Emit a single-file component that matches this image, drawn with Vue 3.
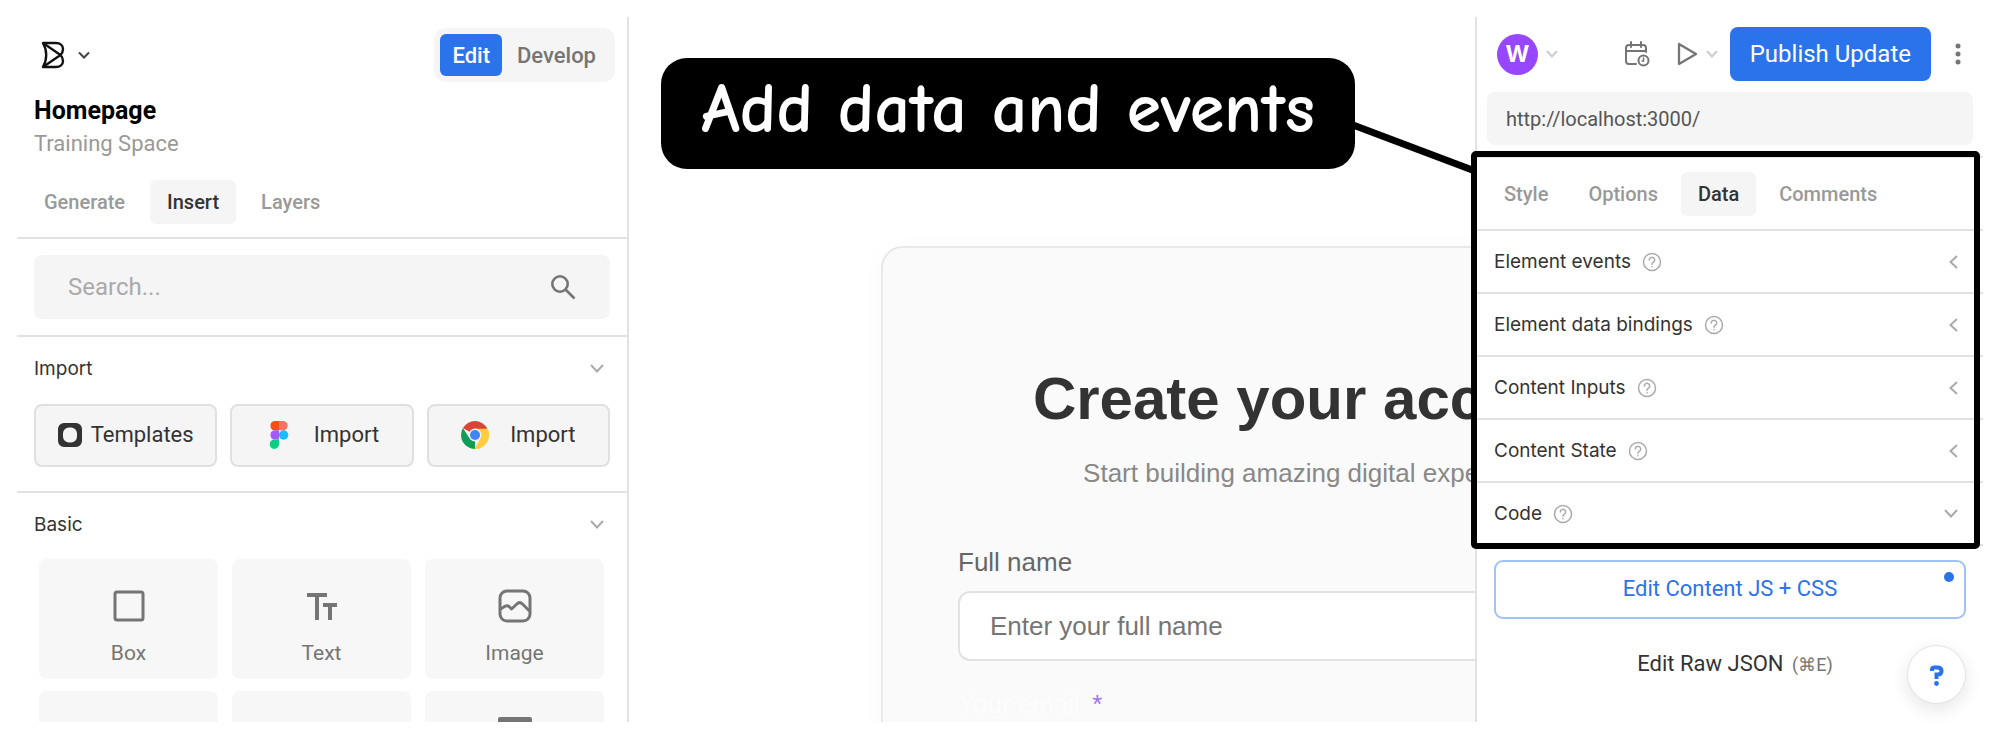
<script setup>
import { ref } from 'vue'

const mode = ref('Edit')
const modes = ['Edit', 'Develop']

const leftTab = ref('Insert')
const leftTabs = ['Generate', 'Insert', 'Layers']

const rightTab = ref('Data')
const rightTabs = ['Style', 'Options', 'Data', 'Comments']

const search = ref('')
const url = ref('http://localhost:3000/')
const fullName = ref('')

const sections = ref([
  { label: 'Element events', open: false },
  { label: 'Element data bindings', open: false },
  { label: 'Content Inputs', open: false },
  { label: 'Content State', open: false },
  { label: 'Code', open: true }
])
</script>

<template>
  <div class="editor">
    <aside class="left-panel">
      <header class="left-header">
        <button class="logo-btn" type="button" aria-label="Main menu">
          <svg width="24" height="28" viewBox="0 0 24 28" fill="none" stroke="#111" stroke-width="2.4" stroke-linejoin="round">
            <path d="M2 2h13c4 0 7 2.500 7 6 0 2.500-1 4.500-2.500 6 1.500 1.500 2.500 3.500 2.500 6 0 3.500-3 6-7 6H2c2-3.500 3.200-7.500 3.200-12S4 5.500 2 2z"/>
            <path d="M2 2l17.500 12L2 26"/>
          </svg>
          <svg width="12" height="8" viewBox="0 0 12 8" fill="none" stroke="#444" stroke-width="2">
            <path d="M1 1.500l5 5 5-5"/>
          </svg>
        </button>
        <div class="mode-switch">
          <button
            v-for="m in modes"
            :key="m"
            type="button"
            class="mode-btn"
            :class="{ active: mode === m }"
            @click="mode = m"
          >{{ m }}</button>
        </div>
      </header>

      <div class="page-info">
        <h1 class="page-name">Homepage</h1>
        <p class="space-name">Training Space</p>
      </div>

      <nav class="tabs left-tabs">
        <button
          v-for="t in leftTabs"
          :key="t"
          type="button"
          class="tab"
          :class="{ active: leftTab === t }"
          @click="leftTab = t"
        >{{ t }}</button>
      </nav>

      <div class="search-row">
        <label class="search-box">
          <input v-model="search" class="search-input" type="text" placeholder="Search..." aria-label="Search" />
          <svg width="26" height="26" viewBox="0 0 26 26" fill="none" stroke="#757575" stroke-width="2.600">
            <circle cx="10" cy="10" r="7.700"/>
            <path d="M15.500 15.500l9 9"/>
          </svg>
        </label>
      </div>

      <section class="group">
        <button class="group-title" type="button">
          <span>Import</span>
          <svg class="chevron" width="14" height="9" viewBox="0 0 14 9"><path d="M1 1l6 6.500L13 1"/></svg>
        </button>
        <div class="import-row">
          <button class="import-btn templates" type="button">
            <svg width="24" height="24" viewBox="0 0 24 24">
              <path fill="#333" fill-rule="evenodd" d="M6 0h12a6 6 0 0 1 6 6v12a6 6 0 0 1-6 6H6a6 6 0 0 1-6-6V6a6 6 0 0 1 6-6zm5 4.500a6 6 0 0 0-6 6v3a6 6 0 0 0 6 6h2a6 6 0 0 0 6-6v-3a6 6 0 0 0-6-6z"/>
            </svg>
            <span>Templates</span>
          </button>
          <button class="import-btn" type="button">
            <svg width="28" height="28" viewBox="0 0 28 28">
              <path fill="#f24e1e" d="M14 0H9.500a4.700 4.700 0 0 0 0 9.300H14z"/>
              <path fill="#ff7262" d="M14 0h4.500a4.700 4.700 0 0 1 0 9.300H14z"/>
              <path fill="#a259ff" d="M14 9.300H9.500a4.700 4.700 0 0 0 0 9.300H14z"/>
              <circle fill="#1abcfe" cx="18.600" cy="14" r="4.700"/>
              <path fill="#0acf83" d="M9.500 18.600H14v4.700a4.650 4.650 0 1 1-4.500-4.700z"/>
            </svg>
            <span>Import</span>
          </button>
          <button class="import-btn" type="button">
            <svg width="28" height="28" viewBox="0 0 28 28">
              <path fill="#db4437" d="M14 14L1.900 7a14 14 0 0 1 24.200 0z"/>
              <path fill="#0f9d58" d="M14 14v14A14 14 0 0 1 1.900 7l6.500 10z"/>
              <path fill="#ffcd40" d="M14 7.500h12.500A14 14 0 0 1 13.500 28l6-11z"/>
              <path fill="#db4437" d="M3 7.500h23.300L24 5H5z"/>
              <circle fill="#f1f1f1" cx="14" cy="14" r="6.500"/>
              <circle fill="#4285f4" cx="14" cy="14" r="5"/>
            </svg>
            <span>Import</span>
          </button>
        </div>
      </section>

      <section class="group basic">
        <button class="group-title" type="button">
          <span>Basic</span>
          <svg class="chevron" width="14" height="9" viewBox="0 0 14 9"><path d="M1 1l6 6.500L13 1"/></svg>
        </button>
        <div class="block-grid">
          <button class="block" type="button">
            <span class="block-icon">
              <svg width="32" height="32" viewBox="0 0 32 32" fill="none" stroke="#757575" stroke-width="3">
                <rect x="2" y="2" width="28" height="28" rx="2"/>
              </svg>
            </span>
            <span>Box</span>
          </button>
          <button class="block" type="button">
            <span class="block-icon">
              <svg width="32" height="32" viewBox="0 0 32 32" fill="none" stroke="#757575" stroke-width="4">
                <path d="M1 5h20M11 5v25M17 15h14M24 15v15"/>
              </svg>
            </span>
            <span>Text</span>
          </button>
          <button class="block" type="button">
            <span class="block-icon">
              <svg width="34" height="34" viewBox="0 0 34 34" fill="none" stroke="#757575" stroke-width="3" stroke-linejoin="round">
                <rect x="2" y="2" width="30" height="30" rx="7"/>
                <path d="M2.500 20l5-3q2-1 4 1l2 2 6-5.500q2.500-2 5 0.500l7 7"/>
              </svg>
            </span>
            <span>Image</span>
          </button>
          <button class="block" type="button" aria-label="Video"></button>
          <button class="block" type="button" aria-label="Custom code"></button>
          <button class="block" type="button" aria-label="Section">
            <span class="block-icon">
              <svg width="34" height="42" viewBox="0 0 34 42" fill="#757575">
                <rect width="34" height="18" rx="2"/>
                <rect y="24" width="34" height="18" rx="2"/>
              </svg>
            </span>
          </button>
        </div>
      </section>
    </aside>

    <main class="stage">
      <div class="canvas">
        <form class="signup" @submit.prevent>
          <h2 class="signup-title">Create your account</h2>
          <p class="signup-sub">Start building amazing digital experiences</p>
          <label class="field-label" for="full-name">Full name</label>
          <input id="full-name" v-model="fullName" class="field-input" type="text" placeholder="Enter your full name" />
          <label class="field-label ghost" for="email">Your email <span class="required">*</span></label>
          <input id="email" class="field-input" type="email" />
        </form>
      </div>

      <!-- walkthrough callout and its connector -->
      <svg class="connector" width="126" height="56" viewBox="0 0 126 56">
        <path d="M2 4l122 46" stroke="#000" stroke-width="7"/>
      </svg>
      <div class="callout">Add data and events</div>
    </main>

    <aside class="right-panel">
      <header class="right-header">
        <button class="plain-btn account" type="button" aria-label="Account">
          <span class="avatar">W</span>
          <svg class="chevron light" width="12" height="8" viewBox="0 0 12 8"><path d="M1 1l5 5.500L11 1"/></svg>
        </button>
        <button class="plain-btn" type="button" aria-label="Schedule">
          <svg width="26" height="26" viewBox="0 0 26 26" fill="none" stroke="#757575" stroke-width="2" stroke-linecap="round">
            <path d="M12 23H5a3 3 0 0 1-3-3V7a3 3 0 0 1 3-3h14a3 3 0 0 1 3 3v4M2 10h20M7 1v5M17 1v5"/>
            <circle cx="19.500" cy="19.500" r="5"/>
            <path d="M19.500 17v3H18" stroke-width="1.500"/>
          </svg>
        </button>
        <button class="plain-btn preview" type="button" aria-label="Preview">
          <svg width="21" height="26" viewBox="0 0 21 26" fill="none" stroke="#757575" stroke-width="2.300" stroke-linejoin="round">
            <path d="M2 3v20l17-10z"/>
          </svg>
          <svg class="chevron light" width="12" height="8" viewBox="0 0 12 8"><path d="M1 1l5 5.500L11 1"/></svg>
        </button>
        <button class="publish-btn" type="button">Publish Update</button>
        <button class="plain-btn more" type="button" aria-label="More">
          <svg width="6" height="22" viewBox="0 0 6 22" fill="#757575">
            <circle cx="3" cy="3" r="2.500"/>
            <circle cx="3" cy="11" r="2.500"/>
            <circle cx="3" cy="19" r="2.500"/>
          </svg>
        </button>
      </header>

      <input v-model="url" class="url-input" type="text" aria-label="Preview URL" />

      <div class="inspector">
        <nav class="tabs right-tabs">
          <button
            v-for="t in rightTabs"
            :key="t"
            type="button"
            class="tab"
            :class="{ active: rightTab === t }"
            @click="rightTab = t"
          >{{ t }}</button>
        </nav>
        <button
          v-for="s in sections"
          :key="s.label"
          type="button"
          class="section-row"
          @click="s.open = !s.open"
        >
          <span>{{ s.label }}</span>
          <svg width="20" height="20" viewBox="0 0 20 20" fill="none" stroke="#aaa" stroke-width="1.500" stroke-linecap="round">
            <circle cx="10" cy="10" r="8.500"/>
            <path d="M7.300 8a2.700 2.700 0 1 1 4.200 2.200c-1 .6-1.500 1-1.500 2M10 14.600v.2"/>
          </svg>
          <svg v-if="s.open" class="chevron end" width="14" height="9" viewBox="0 0 14 9"><path d="M1 1l6 6.500L13 1"/></svg>
          <svg v-else class="chevron end" width="9" height="14" viewBox="0 0 9 14"><path d="M8 1L1.500 7 8 13"/></svg>
        </button>
        <div class="highlight"></div>
      </div>

      <div class="code-actions">
        <button class="edit-code-btn" type="button">
          Edit Content JS + CSS
          <span class="dot"></span>
        </button>
        <button class="raw-json-btn" type="button">Edit Raw JSON <small>(⌘E)</small></button>
      </div>

      <button class="help-btn" type="button" aria-label="Help">
        <svg width="16" height="24" viewBox="0 0 16 24" fill="none" stroke="#2b73ea" stroke-width="4">
          <path d="M3 8V6.500q0-2 2.500-2h3q4 0 4 3.500t-4 3.500H7.500V16"/>
          <circle cx="7.500" cy="20.500" r="2.400" fill="#2b73ea" stroke="none"/>
        </svg>
      </button>
    </aside>
  </div>
</template>

<style>
body {
  margin: 0;
  background: #fff;
}
</style>

<style scoped>
.editor {
  display: grid;
  grid-template-columns: 612px minmax(0, 1fr) 508px;
  box-sizing: border-box;
  height: 100vh;
  padding: 17px;
  overflow: hidden;
  font-family: Roboto, "Liberation Sans", sans-serif;
  color: #333;
}

button,
input {
  box-sizing: border-box;
  margin: 0;
  font-family: inherit;
  color: inherit;
}

button {
  padding: 0;
  border: none;
  background: none;
  cursor: pointer;
}

svg {
  display: block;
  flex-shrink: 0;
}

.chevron {
  fill: none;
  stroke: #aaa;
  stroke-width: 2;
}

.chevron.light {
  stroke: #ccc;
}

/* left panel */
.left-panel {
  display: flex;
  flex-direction: column;
  min-height: 0;
  overflow: hidden;
  border-right: 2px solid #e2e2e2;
}

.left-header {
  display: flex;
  align-items: center;
  justify-content: space-between;
  padding: 11px 12px 0 24px;
}

.logo-btn {
  display: flex;
  align-items: center;
  gap: 13px;
}

.mode-switch {
  display: flex;
  padding: 6px 4px 6px 6px;
  border-radius: 12px;
  background: #f5f5f5;
}

.mode-btn {
  height: 42px;
  padding: 0 15px;
  border-radius: 6px;
  font-size: 22px;
  font-weight: 500;
  color: #757575;
}

.mode-btn.active {
  padding: 0 12px;
  background: #2b73ea;
  color: #fff;
}

.page-info {
  padding: 13px 17px 0;
}

.page-name {
  margin: 0;
  font-size: 25px;
  font-weight: 700;
  line-height: 32px;
  color: #000;
}

.space-name {
  margin: 0;
  font-size: 22px;
  line-height: 34px;
  color: #999;
}

.tabs {
  display: flex;
  border-bottom: 2px solid #e2e2e2;
}

.tab {
  height: 44px;
  padding: 0 17px;
  border-radius: 6px;
  font-size: 20px;
  font-weight: 500;
  color: #999;
}

.tab.active {
  background: #f5f5f5;
  color: #333;
}

.left-tabs {
  gap: 8px;
  padding: 19px 10px 13px;
}

.search-row {
  padding: 16px 17px;
  border-bottom: 2px solid #e2e2e2;
}

.search-box {
  display: flex;
  align-items: center;
  height: 64px;
  padding: 0 34px;
  box-sizing: border-box;
  border-radius: 8px;
  background: #f5f5f5;
}

.search-input {
  flex: 1;
  min-width: 0;
  padding: 0;
  border: none;
  outline: none;
  background: none;
  font-size: 24px;
}

.search-input::placeholder {
  color: #aaa;
}

.group {
  border-bottom: 2px solid #e2e2e2;
}

.group-title {
  display: flex;
  align-items: center;
  justify-content: space-between;
  width: 100%;
  height: 62px;
  padding: 0 23px 0 17px;
  font-family: Inter, Roboto, sans-serif;
  font-size: 19px;
}

.import-row {
  display: grid;
  grid-template-columns: repeat(3, 1fr);
  gap: 13px;
  padding: 5px 17px 24px;
}

.import-btn {
  display: flex;
  align-items: center;
  justify-content: center;
  gap: 21px;
  height: 63px;
  padding-bottom: 2px;
  border: 2px solid #e0e0e0;
  border-radius: 8px;
  background: #f5f5f5;
  font-size: 22px;
}

.import-btn.templates {
  gap: 9px;
}

.group.basic {
  border-bottom: none;
}

.block-grid {
  display: grid;
  grid-template-columns: repeat(3, 1fr);
  gap: 12px 14px;
  padding: 4px 23px 0 22px;
}

.block {
  display: flex;
  flex-direction: column;
  align-items: center;
  gap: 14px;
  height: 120px;
  padding-top: 26px;
  border-radius: 8px;
  background: #f7f7f7;
  font-size: 21px;
  color: #757575;
}

.block-icon {
  display: flex;
  align-items: center;
  height: 42px;
}

/* canvas */
.stage {
  position: relative;
  min-height: 0;
}

.canvas {
  height: 100%;
  overflow: hidden;
  box-sizing: border-box;
  padding: 229px 0 0 252px;
}

.signup {
  box-sizing: border-box;
  width: 884px;
  padding: 116px 75px 60px;
  border: 2px solid #e8e8e8;
  border-radius: 22px;
  background: #fafafa;
  box-shadow: 0 4px 24px rgba(0, 0, 0, 0.03);
  font-family: "Liberation Sans", Arial, sans-serif;
}

.signup-title {
  margin: 0;
  font-size: 60px;
  line-height: 70px;
  text-align: center;
}

.signup-sub {
  margin: 22px 0 0;
  font-size: 26px;
  line-height: 34px;
  text-align: center;
  color: #888;
}

.field-label {
  display: block;
  margin-top: 55px;
  font-size: 26px;
  line-height: 34px;
  color: #666;
}

.field-input {
  width: 100%;
  height: 70px;
  margin-top: 12px;
  padding: 0 30px;
  border: 2px solid #e2e2e2;
  border-radius: 12px;
  outline: none;
  background: #fff;
  font-size: 26px;
}

.field-input::placeholder {
  color: #757575;
}

.field-label.ghost {
  margin-top: 26px;
  color: #fdfdfd;
}

.required {
  margin-left: 5px;
  color: #a070f0;
}

.callout {
  position: absolute;
  top: 41px;
  left: 32px;
  right: 120px;
  height: 111px;
  border-radius: 26px;
  background: #000;
  color: #fff;
  font-family: "Comic Neue", Lato, sans-serif;
  font-size: 70px;
  font-weight: 700;
  line-height: 104px;
  text-align: center;
  white-space: nowrap;
}

.connector {
  position: absolute;
  top: 104px;
  right: -2px;
}

/* right panel */
.right-panel {
  position: relative;
  display: flex;
  flex-direction: column;
  min-height: 0;
  border-left: 2px solid #e2e2e2;
}

.right-header {
  display: flex;
  align-items: center;
  padding: 10px 22px 0 20px;
}

.plain-btn {
  display: flex;
  align-items: center;
}

.account {
  gap: 8px;
  margin-right: auto;
}

.avatar {
  width: 41px;
  height: 41px;
  border-radius: 50%;
  background: #9747ff;
  color: #fff;
  font-family: Inter, Roboto, sans-serif;
  font-size: 23px;
  font-weight: 700;
  line-height: 41px;
  text-align: center;
}

.preview {
  gap: 8px;
  margin: 0 12px 0 27px;
}

.publish-btn {
  height: 54px;
  padding: 0 20px;
  border-radius: 8px;
  background: #2b73ea;
  font-size: 24px;
  color: #fff;
}

.more {
  margin-left: 24px;
}

.url-input {
  height: 53px;
  margin: 11px 10px 11px;
  padding: 0 19px;
  border: none;
  border-radius: 8px;
  outline: none;
  background: #f5f5f5;
  font-size: 20px;
  color: #555;
}

.inspector {
  position: relative;
  border-top: 2px solid #e2e2e2;
}

.right-tabs {
  gap: 6px;
  padding: 14px 10px 13px;
}

.section-row {
  display: flex;
  align-items: center;
  gap: 11px;
  width: 100%;
  height: 63px;
  padding: 0 25px 0 17px;
  border-bottom: 2px solid #e2e2e2;
  font-family: Inter, Roboto, sans-serif;
  font-size: 19px;
}

.section-row .end {
  margin-left: auto;
}

.highlight {
  position: absolute;
  inset: -7px 3px -3px -6px;
  border: 6px solid #000;
  border-radius: 5px;
  pointer-events: none;
}

.code-actions {
  display: flex;
  flex-direction: column;
  gap: 16px;
  padding: 14px 17px 0;
}

.edit-code-btn {
  position: relative;
  height: 59px;
  padding-bottom: 2px;
  border: 2px solid #9fc3f8;
  border-radius: 9px;
  font-size: 22px;
  color: #2b73ea;
}

.dot {
  position: absolute;
  top: 10px;
  right: 10px;
  width: 10px;
  height: 10px;
  border-radius: 50%;
  background: #2b73ea;
}

.raw-json-btn {
  height: 57px;
  padding-left: 10px;
  font-size: 22px;
}

.raw-json-btn small {
  margin-left: 3px;
  font-size: 18px;
  color: #757575;
}

.help-btn {
  position: absolute;
  right: 17px;
  bottom: 18px;
  display: flex;
  align-items: center;
  justify-content: center;
  width: 59px;
  height: 59px;
  border: 1px solid #e2e2e2;
  border-radius: 50%;
  background: #fff;
  box-shadow: 0 6px 18px rgba(0, 0, 0, 0.1);
}
</style>
